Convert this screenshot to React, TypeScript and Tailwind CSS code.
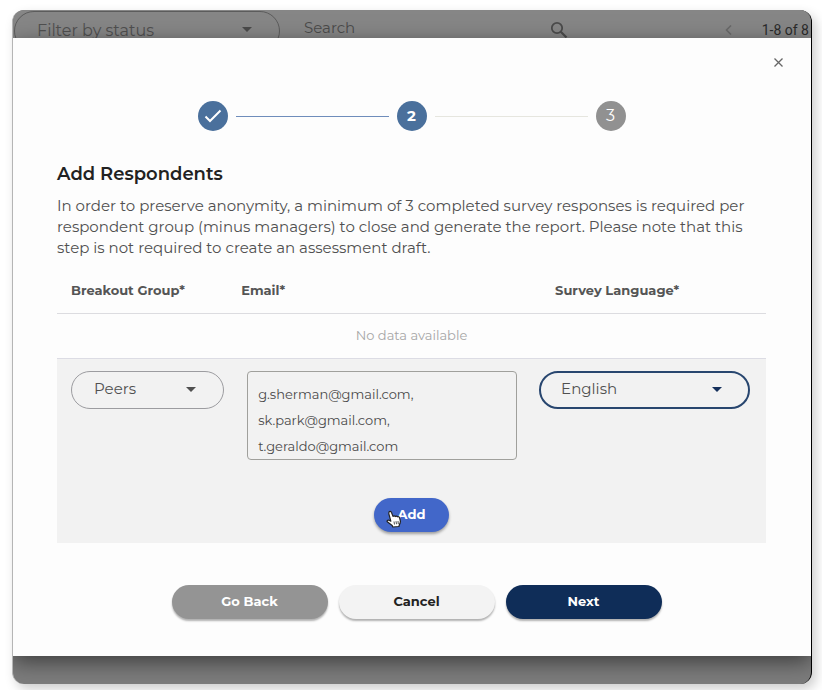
import React from "react";
import { clsx } from "clsx";

const ACTION_BUTTON = "h-[34px] w-[156px] rounded-full text-[13px] font-bold shadow-[0_2px_2px_rgba(0,0,0,0.3)]";

interface PillSelectProps {
  id: string;
  label: string;
  options: string[];
  className?: string;
  selectClassName?: string;
  caretClassName?: string;
}

const PillSelect = ({ id, label, options, className, selectClassName, caretClassName }: PillSelectProps) => (
  <div className={clsx("relative", className)}>
    <select
      id={id}
      aria-label={label}
      className={clsx("w-full appearance-none rounded-full bg-transparent outline-none", selectClassName)}
    >
      {options.map((option) => (
        <option key={option}>{option}</option>
      ))}
    </select>
    <svg
      viewBox="0 0 10 5"
      className={clsx("pointer-events-none absolute top-4 h-[5px] w-[10px] fill-current", caretClassName)}
    >
      <path d="M0 0h10L5 5z" />
    </svg>
  </div>
);

const SearchIcon = () => (
  <svg viewBox="0 0 18 18" className="h-[18px] w-[18px]" fill="none" stroke="currentColor">
    <circle cx="7" cy="7" r="5.2" strokeWidth="1.8" />
    <path d="M10.8 10.8L16.5 16.5" strokeWidth="2.2" />
  </svg>
);

const Toolbar = () => (
  <div className="flex h-7 items-start overflow-hidden bg-[#868686] text-[#4b4b4b]">
    <PillSelect
      id="status"
      label="Filter by status"
      options={["Filter by status"]}
      className="ml-px w-1/3"
      selectClassName="mt-px h-10 border border-[#5c5c5c] pl-[22px] text-base text-[#505050]"
      caretClassName="right-7 mt-px"
    />
    <input
      aria-label="Search"
      placeholder="Search"
      className="ml-6 mt-2 h-5 w-[240px] min-w-0 bg-transparent text-[15px] outline-none placeholder:text-[#4b4b4b]"
    />
    <button aria-label="Run search" className="ml-[6px] mt-[11px]">
      <SearchIcon />
    </button>
    <button aria-label="Previous page" className="ml-auto mt-[15px] text-[#6a6a6a]">
      <svg viewBox="0 0 7 10" className="h-[10px] w-[7px]" fill="none" stroke="currentColor" strokeWidth="1.6">
        <path d="M6 0.5L1.5 5L6 9.5" />
      </svg>
    </button>
    <span className="ml-[30px] mr-[2px] mt-[10px] whitespace-nowrap font-[Roboto,sans-serif] text-sm text-[#2b2b2b]">1-8 of 8</span>
  </div>
);

const Stepper = () => (
  <ol className="flex items-center justify-center gap-2 text-base text-white">
    <li aria-label="Step 1" className="flex h-[30px] w-[30px] items-center justify-center rounded-full bg-[#4a709c]">
      <svg viewBox="0 0 18 14" className="h-[14px] w-[18px]" fill="none" stroke="currentColor" strokeWidth="2">
        <path d="M1.5 7.5L6 12L16.5 1.5" />
      </svg>
    </li>
    <li aria-hidden="true" className="h-px w-[153px] bg-[#6f8dbb]" />
    <li className="flex h-[30px] w-[30px] items-center justify-center rounded-full bg-[#4a709c] text-[15px] font-bold">2</li>
    <li aria-hidden="true" className="h-px w-[153px] bg-[#e6e6df]" />
    <li className="flex h-[30px] w-[30px] items-center justify-center rounded-full bg-[#919191]">3</li>
  </ol>
);

const HandCursor = () => (
  <svg
    viewBox="0 0 16 18"
    className="pointer-events-none absolute left-3 top-3 h-[18px] w-4"
    fill="#fff"
    stroke="#222"
    strokeWidth="1.2"
    strokeLinejoin="round"
  >
    <path d="M3 2C3.6 .9 5 1.2 5.4 2.3L7 6.4C7.5 5.6 8.8 5.7 9.2 6.5C9.8 5.8 11 6 11.4 6.8C12.2 6.3 13.3 6.8 13.6 7.8L14.4 11.2C14.6 12.8 13.8 14 13.2 15L13 16.5L6.8 17L6.2 15.6L1.6 12.1C.4 11 1.6 9.8 3 10.3L4.8 11.2L2.8 3.6Z" />
    <path d="M8 11.5L8.5 14.5M10 11.2L10.5 14.2M12 11L12.3 14" strokeWidth=".8" />
  </svg>
);

const RespondentsTable = () => (
  <table className="w-full table-fixed border-collapse text-left">
    <thead>
      <tr className="h-11 border-b border-[#dcdce0] text-[13px] text-[#555]">
        <th className="w-[24%] pl-[14px] font-bold">
          Breakout Group*
        </th>
        <th className="w-[44%] pl-[14px] font-bold">
          Email*
        </th>
        <th className="w-[32%] pl-4 font-bold">
          Survey Language*
        </th>
      </tr>
    </thead>
    <tbody>
      <tr className="h-[45px] border-b border-[#dcdce4]">
        <td colSpan={3} className="text-center text-[13px] text-[#a6a6a6]">
          No data available
        </td>
      </tr>
      <tr className="bg-[#f2f2f2] align-top text-[#505050]">
        <td className="pl-[14px] pt-3">
          <PillSelect
            id="group"
            label="Breakout Group"
            options={["Peers"]}
            className="w-[153px]"
            selectClassName="h-[38px] border border-[#9c9ca0] pl-[22px] text-[15px]"
            caretClassName="right-7"
          />
        </td>
        <td className="pl-5 pr-[22px] pt-3">
          <textarea
            aria-label="Email"
            rows={3}
            className="block h-[89px] w-full resize-none overflow-hidden rounded border border-[#a0a09c] bg-transparent px-[10px] pt-[9px] text-[13px] leading-[26px] text-[#4a4a4a] outline-none"
            defaultValue={"g.sherman@gmail.com,\nsk.park@gmail.com,\nt.geraldo@gmail.com"}
          />
        </td>
        <td className="pr-4 pt-3">
          <PillSelect
            id="language"
            label="Survey Language"
            options={["English"]}
            selectClassName="h-[38px] border-2 border-[#28466f] pl-5 text-[15px]"
            caretClassName="right-7 text-[#15305c]"
          />
        </td>
      </tr>
      <tr className="bg-[#f2f2f2]">
        <td colSpan={3} className="pb-[11px] pt-[38px]">
          <div className="relative mx-auto w-[75px]">
            <button className="block h-[34px] w-full rounded-full bg-[#4267c9] text-[13px] font-bold text-white shadow-[0_2px_3px_rgba(0,0,0,0.35)]">
              Add
            </button>
            <HandCursor />
          </div>
        </td>
      </tr>
    </tbody>
  </table>
);

const RespondentsDialog = () => (
  <section
    role="dialog"
    aria-labelledby="dialog-title"
    className="relative bg-[#fdfdfd] pb-[37px] pl-11 pr-[45px] pt-[63px] shadow-[0_6px_20px_rgba(0,0,0,0.5)]"
  >
    <button aria-label="Close" className="absolute right-6 top-4 p-1 text-[#666]">
      <svg viewBox="0 0 9 9" className="h-[9px] w-[9px]" stroke="currentColor" strokeWidth="1.3">
        <path d="M.5 .5L8.5 8.5M8.5 .5L.5 8.5" />
      </svg>
    </button>
    <Stepper />
    <h2 id="dialog-title" className="mt-8 text-lg leading-[22px] font-semibold text-[#222]">
      Add Respondents
    </h2>
    <p className="mb-[11px] mt-[10px] text-[15px] leading-[21px] text-[#505050]">
      In order to preserve anonymity, a minimum of 3 completed survey responses is required per
      respondent group (minus managers) to close and generate the report. Please note that this
      step is not required to create an assessment draft.
    </p>
    <RespondentsTable />
    <div className="mt-[42px] flex justify-center gap-[11px] pl-[10px]">
      <button className={clsx(ACTION_BUTTON, "bg-[#949494] text-white")}>Go Back</button>
      <button className={clsx(ACTION_BUTTON, "bg-[#f3f3f3] text-[#222]")}>Cancel</button>
      <button className={clsx(ACTION_BUTTON, "bg-[#0f2d58] text-white")}>Next</button>
    </div>
  </section>
);

export default function App() {
  return (
    <div className="bg-white pb-1.5 pl-3 pr-[10px] pt-[10px] font-[Montserrat,Inter,sans-serif]">
      <main className="overflow-hidden rounded-xl border-l border-r border-l-[#b5b5b5] border-r-black bg-[#7c7c7c] shadow-[4px_5px_12px_rgba(0,0,0,0.2)]">
        <Toolbar />
        <RespondentsDialog />
        <div className="h-7" />
      </main>
    </div>
  );
}
